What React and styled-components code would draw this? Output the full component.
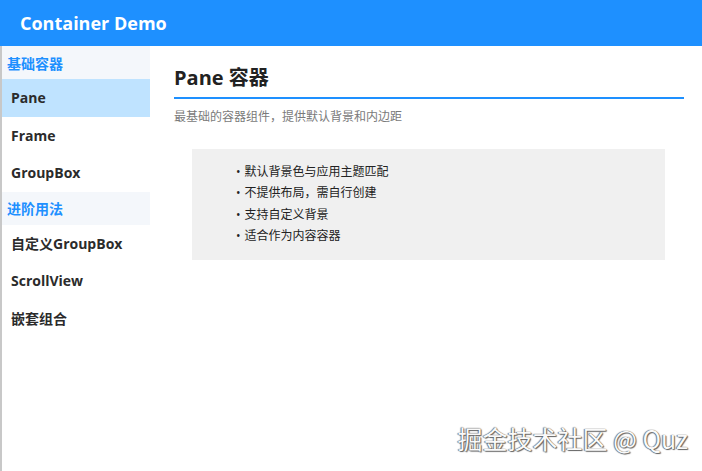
import styled, { createGlobalStyle } from 'styled-components'

const GlobalStyle = createGlobalStyle`
  html, body {
    margin: 0;
    padding: 0;
    background: #fff;
    font-family: 'Open Sans', 'Noto Sans CJK SC', sans-serif;
  }
`

const Page = styled.div`
  width: 702px;
  height: 471px;
  display: flex;
  flex-direction: column;
  position: relative;
  overflow: hidden;
`
const Header = styled.div`
  height: 46px;
  flex-shrink: 0;
  background: #1e90ff;
  color: #fff;
  display: flex;
  align-items: center;
  padding-left: 20px;
  font-size: 18px;
  font-weight: 700;
`
const Body = styled.div`
  flex: 1;
  display: flex;
  border-left: 2px solid #c8c8c8;
`
const Sidebar = styled.div`
  width: 148px;
  flex-shrink: 0;
  display: flex;
  flex-direction: column;
`
const SectionTitle = styled.div`
  height: 33px;
  display: flex;
  align-items: center;
  padding-left: 5px;
  background: #f4f7fb;
  color: #1e90ff;
  font-size: 14px;
  font-weight: 700;
`
const NavItem = styled.div`
  height: 37.5px;
  display: flex;
  align-items: center;
  padding-left: 9px;
  font-size: 14px;
  font-weight: 700;
  color: #2b2b2b;
  background: ${(p) => (p.active ? '#bfe3ff' : 'transparent')};
`
const Main = styled.div`
  flex: 1;
  padding: 20px 18px 0 24px;
`
const Title = styled.h1`
  margin: 0;
  font-size: 20px;
  font-weight: 700;
  color: #222;
  line-height: 24px;
  padding-bottom: 7px;
  border-bottom: 2px solid #1e90ff;
`
const Subtitle = styled.p`
  margin: 8px 0 0;
  font-size: 12px;
  color: #7a7a7a;
`
const Card = styled.div`
  margin: 24px 19px 0 18px;
  height: 111px;
  box-sizing: border-box;
  background: #f0f0f0;
  padding: 12px 0 0 44px;
`
const Bullet = styled.div`
  font-size: 12px;
  line-height: 21.3px;
  color: #222;
  &::before {
    content: '•';
    margin-right: 4px;
  }
`
const Watermark = styled.div`
  position: absolute;
  right: 14px;
  bottom: 15px;
  font-size: 25px;
  color: #fafafa;
  font-family: 'Noto Sans CJK SC', 'DejaVu Sans', sans-serif;
  text-shadow: 0 0 1px #444, 1px 1px 1px #666, -1px 0 1px #888;
`

const groups = [
  { title: '基础容器', items: ['Pane', 'Frame', 'GroupBox'] },
  { title: '进阶用法', items: ['自定义GroupBox', 'ScrollView', '嵌套组合'] },
]

const points = ['默认背景色与应用主题匹配', '不提供布局，需自行创建', '支持自定义背景', '适合作为内容容器']

export default function App() {
  return (
    <>
      <GlobalStyle />
      <Page>
        <Header>Container Demo</Header>
        <Body>
          <Sidebar>
            {groups.map((g) => (
              <div key={g.title}>
                <SectionTitle>{g.title}</SectionTitle>
                {g.items.map((item) => (
                  <NavItem key={item} active={item === 'Pane'}>
                    {item}
                  </NavItem>
                ))}
              </div>
            ))}
          </Sidebar>
          <Main>
            <Title>Pane 容器</Title>
            <Subtitle>最基础的容器组件，提供默认背景和内边距</Subtitle>
            <Card>
              {points.map((p) => (
                <Bullet key={p}>{p}</Bullet>
              ))}
            </Card>
          </Main>
        </Body>
        <Watermark>掘金技术社区 @ Quz</Watermark>
      </Page>
    </>
  )
}
